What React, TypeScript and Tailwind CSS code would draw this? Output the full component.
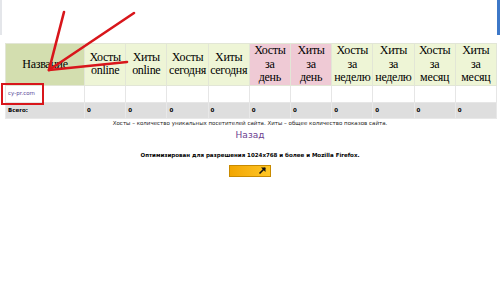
import React from 'react';

const HEADERS: Array<{ lines: string[]; pink?: boolean }> = [
  { lines: ['Хосты', 'online'] },
  { lines: ['Хиты', 'online'] },
  { lines: ['Хосты', 'сегодня'] },
  { lines: ['Хиты', 'сегодня'] },
  { lines: ['Хосты', 'за', 'день'], pink: true },
  { lines: ['Хиты', 'за', 'день'], pink: true },
  { lines: ['Хосты', 'за', 'неделю'] },
  { lines: ['Хиты', 'за', 'неделю'] },
  { lines: ['Хосты', 'за', 'месяц'] },
  { lines: ['Хиты', 'за', 'месяц'] },
];

const verdana = { fontFamily: '"DejaVu Sans", Verdana, sans-serif' };

const App = () => {
  return (
    <div className="relative w-[500px] h-[292px] bg-white overflow-hidden">
      <div className="flex justify-between h-[43px]">
        <div className="w-[2px] h-[35px] bg-[#e4e6ea]" />
        <div className="w-[3px] h-[35px] bg-[#3d78c8]" />
      </div>

      <table className="ml-[5px] w-[491px] border-collapse table-fixed" style={{ fontFamily: '"Liberation Serif", "Times New Roman", serif' }}>
        <colgroup>
          <col className="w-[79px]" />
          {HEADERS.map((_, i) => (
            <col key={i} className="w-[41.2px]" />
          ))}
        </colgroup>
        <thead>
          <tr className="h-[41px]">
            <th className="bg-[#d3deaf] border border-[#e2e6d6] font-normal text-[12px] leading-[13.5px] tracking-[-0.3px] text-black">Название</th>
            {HEADERS.map((h, i) => (
              <th
                key={i}
                className={`${h.pink ? 'bg-[#efcad5]' : 'bg-[#eef5d6]'} border border-[#e2e6d6] font-normal text-[12px] leading-[13.5px] tracking-[-0.3px] text-black px-0`}
              >
                {h.lines.map((l, j) => (
                  <div key={j}>{l}</div>
                ))}
              </th>
            ))}
          </tr>
        </thead>
        <tbody style={verdana}>
          <tr className="h-[17px]">
            <td className="border border-[#e6e6e6] pl-[2px] text-[5.5px] text-[#5a4a9a]">cy-pr.com</td>
            {HEADERS.map((_, i) => (
              <td key={i} className="border border-[#e6e6e6]" />
            ))}
          </tr>
          <tr className="h-[16px] bg-[#dedede]">
            <td className="border border-[#e8e8e8] pl-[2px] text-[5.5px] font-bold text-black">Всего:</td>
            {HEADERS.map((_, i) => (
              <td key={i} className="border border-[#e8e8e8] pl-[2px] text-[5.5px] font-bold text-black">
                0
              </td>
            ))}
          </tr>
        </tbody>
      </table>

      <div className="flex flex-col items-center" style={verdana}>
        <div className="text-[5.5px] leading-[8px] text-[#222]">
          Хосты – количество уникальных посетителей сайта. Хиты – общее количество показов сайта.
        </div>
        <div className="mt-[2px] text-[9px] leading-[12px] text-[#6b3d8f]">Назад</div>
        <div className="mt-[10px] text-[5.5px] leading-[8px] font-bold text-black">
          Оптимизирован для разрешения 1024x768 и более и Mozilla Firefox.
        </div>
        <div className="mt-[6px] w-[42px] h-[12px] border border-[#c88a00] bg-gradient-to-r from-[#f2a600] to-[#ffc623] flex justify-end items-center pr-[3px]">
          <svg width="9" height="9" viewBox="0 0 9 9">
            <path d="M1.5 7.5 L7 2" stroke="#111" strokeWidth="1.6" />
            <path d="M3 1.5 H7.5 V6 Z" fill="#111" />
          </svg>
        </div>
      </div>

      <svg className="absolute left-0 top-0 pointer-events-none" width="500" height="292">
        <g stroke="#d8161b" strokeWidth="2.6" strokeLinecap="round">
          <line x1="64" y1="12" x2="49" y2="70" />
          <line x1="134" y1="13" x2="49" y2="70" />
          <line x1="127" y1="62" x2="49" y2="70" />
        </g>
        <rect x="2" y="84" width="41" height="20" fill="none" stroke="#d8161b" strokeWidth="2" />
      </svg>
    </div>
  );
};

export default App;
